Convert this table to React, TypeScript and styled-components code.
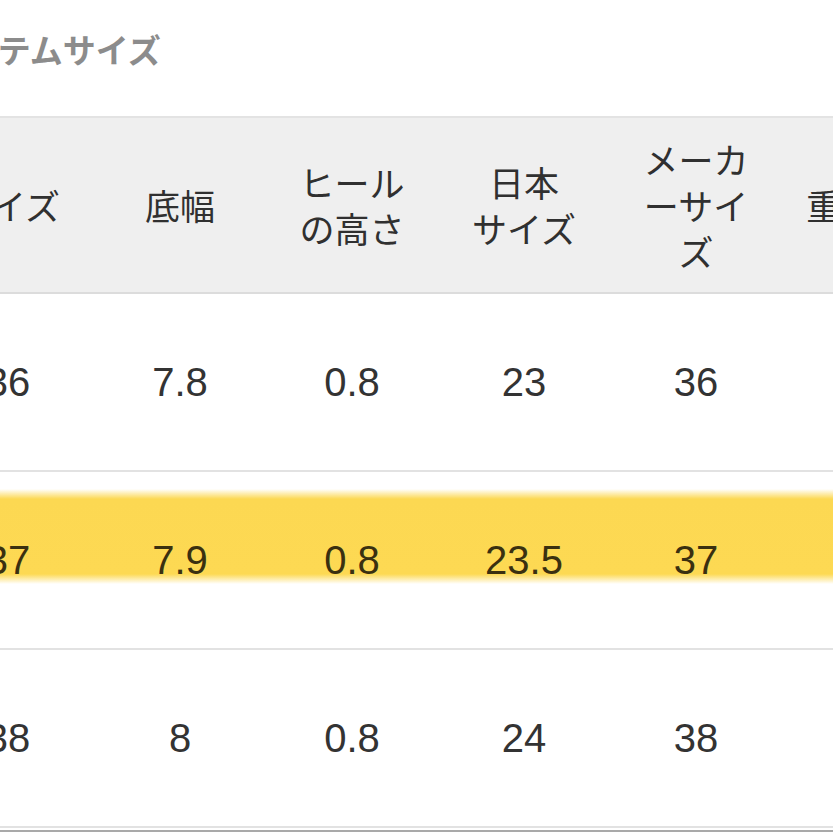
import styled, { createGlobalStyle } from 'styled-components'

const GlobalStyle = createGlobalStyle`
  html, body {
    margin: 0;
    padding: 0;
    background: #ffffff;
    overflow: hidden;
  }
  body {
    font-family: 'Liberation Sans', 'Noto Sans CJK JP', sans-serif;
    color: #333333;
  }
`

const Page = styled.div`
  margin-left: -78px;
  width: 1040px;
`

const Title = styled.h2`
  margin: 25px 0 43px;
  padding-left: 12px;
  font-size: 33px;
  line-height: 48px;
  font-weight: 700;
  color: #8c8c8c;
  font-family: 'Noto Sans CJK JP', sans-serif;
`

const TableFrame = styled.div`
  padding-bottom: 2px;
  border-bottom: 2px solid #a9a9a9;
  width: 1022px;
`

const SizeTable = styled.table`
  width: 1022px;
  table-layout: fixed;
  border-collapse: collapse;
`

const HeadRow = styled.tr`
  height: 176px;
  background: #efefef;
  border-top: 2px solid #e3e3e3;
  border-bottom: 2px solid #dcdcdc;
`

const HeadCell = styled.th`
  padding: 0;
  font-weight: 400;
  font-size: 35px;
  line-height: 46px;
  color: #303030;
  text-align: center;
  vertical-align: middle;
  white-space: nowrap;
  font-family: 'Noto Sans CJK JP', sans-serif;
`

const Row = styled.tr<{ $marked?: boolean }>`
  height: 178px;
  border-bottom: 2px solid #e2e2e2;

  td {
    background: ${p =>
      p.$marked
        ? 'linear-gradient(to bottom, transparent 17px, #fcd852 27px, #fdd953 102px, transparent 112px)'
        : 'transparent'};
    color: ${p => (p.$marked ? '#3a3010' : '#333333')};
  }
`

const Cell = styled.td`
  padding: 0;
  font-size: 40px;
  line-height: 46px;
  text-align: center;
  vertical-align: middle;
  white-space: nowrap;
`

const widths = [172, 172, 172, 172, 172, 162]

const headers: string[][] = [
  ['サイズ'],
  ['底幅'],
  ['ヒール', 'の高さ'],
  ['日本', 'サイズ'],
  ['メーカ', 'ーサイ', 'ズ'],
  ['重量(g)'],
]

const rows = [
  { cells: ['36', '7.8', '0.8', '23', '36', ''], marked: false },
  { cells: ['37', '7.9', '0.8', '23.5', '37', ''], marked: true },
  { cells: ['38', '8', '0.8', '24', '38', ''], marked: false },
]

const App = () => (
  <>
    <GlobalStyle />
    <Page>
      <Title>アイテムサイズ</Title>
      <TableFrame>
        <SizeTable>
          <colgroup>
            {widths.map((w, i) => (
              <col key={i} style={{ width: w }} />
            ))}
          </colgroup>
          <thead>
            <HeadRow>
              {headers.map((lines, i) => (
                <HeadCell key={i}>
                  {lines.map((l, j) => (
                    <span key={j}>
                      {j > 0 && <br />}
                      {l}
                    </span>
                  ))}
                </HeadCell>
              ))}
            </HeadRow>
          </thead>
          <tbody>
            {rows.map((r, i) => (
              <Row key={i} $marked={r.marked}>
                {r.cells.map((c, j) => (
                  <Cell key={j}>{c}</Cell>
                ))}
              </Row>
            ))}
          </tbody>
        </SizeTable>
      </TableFrame>
    </Page>
  </>
)

export default App
